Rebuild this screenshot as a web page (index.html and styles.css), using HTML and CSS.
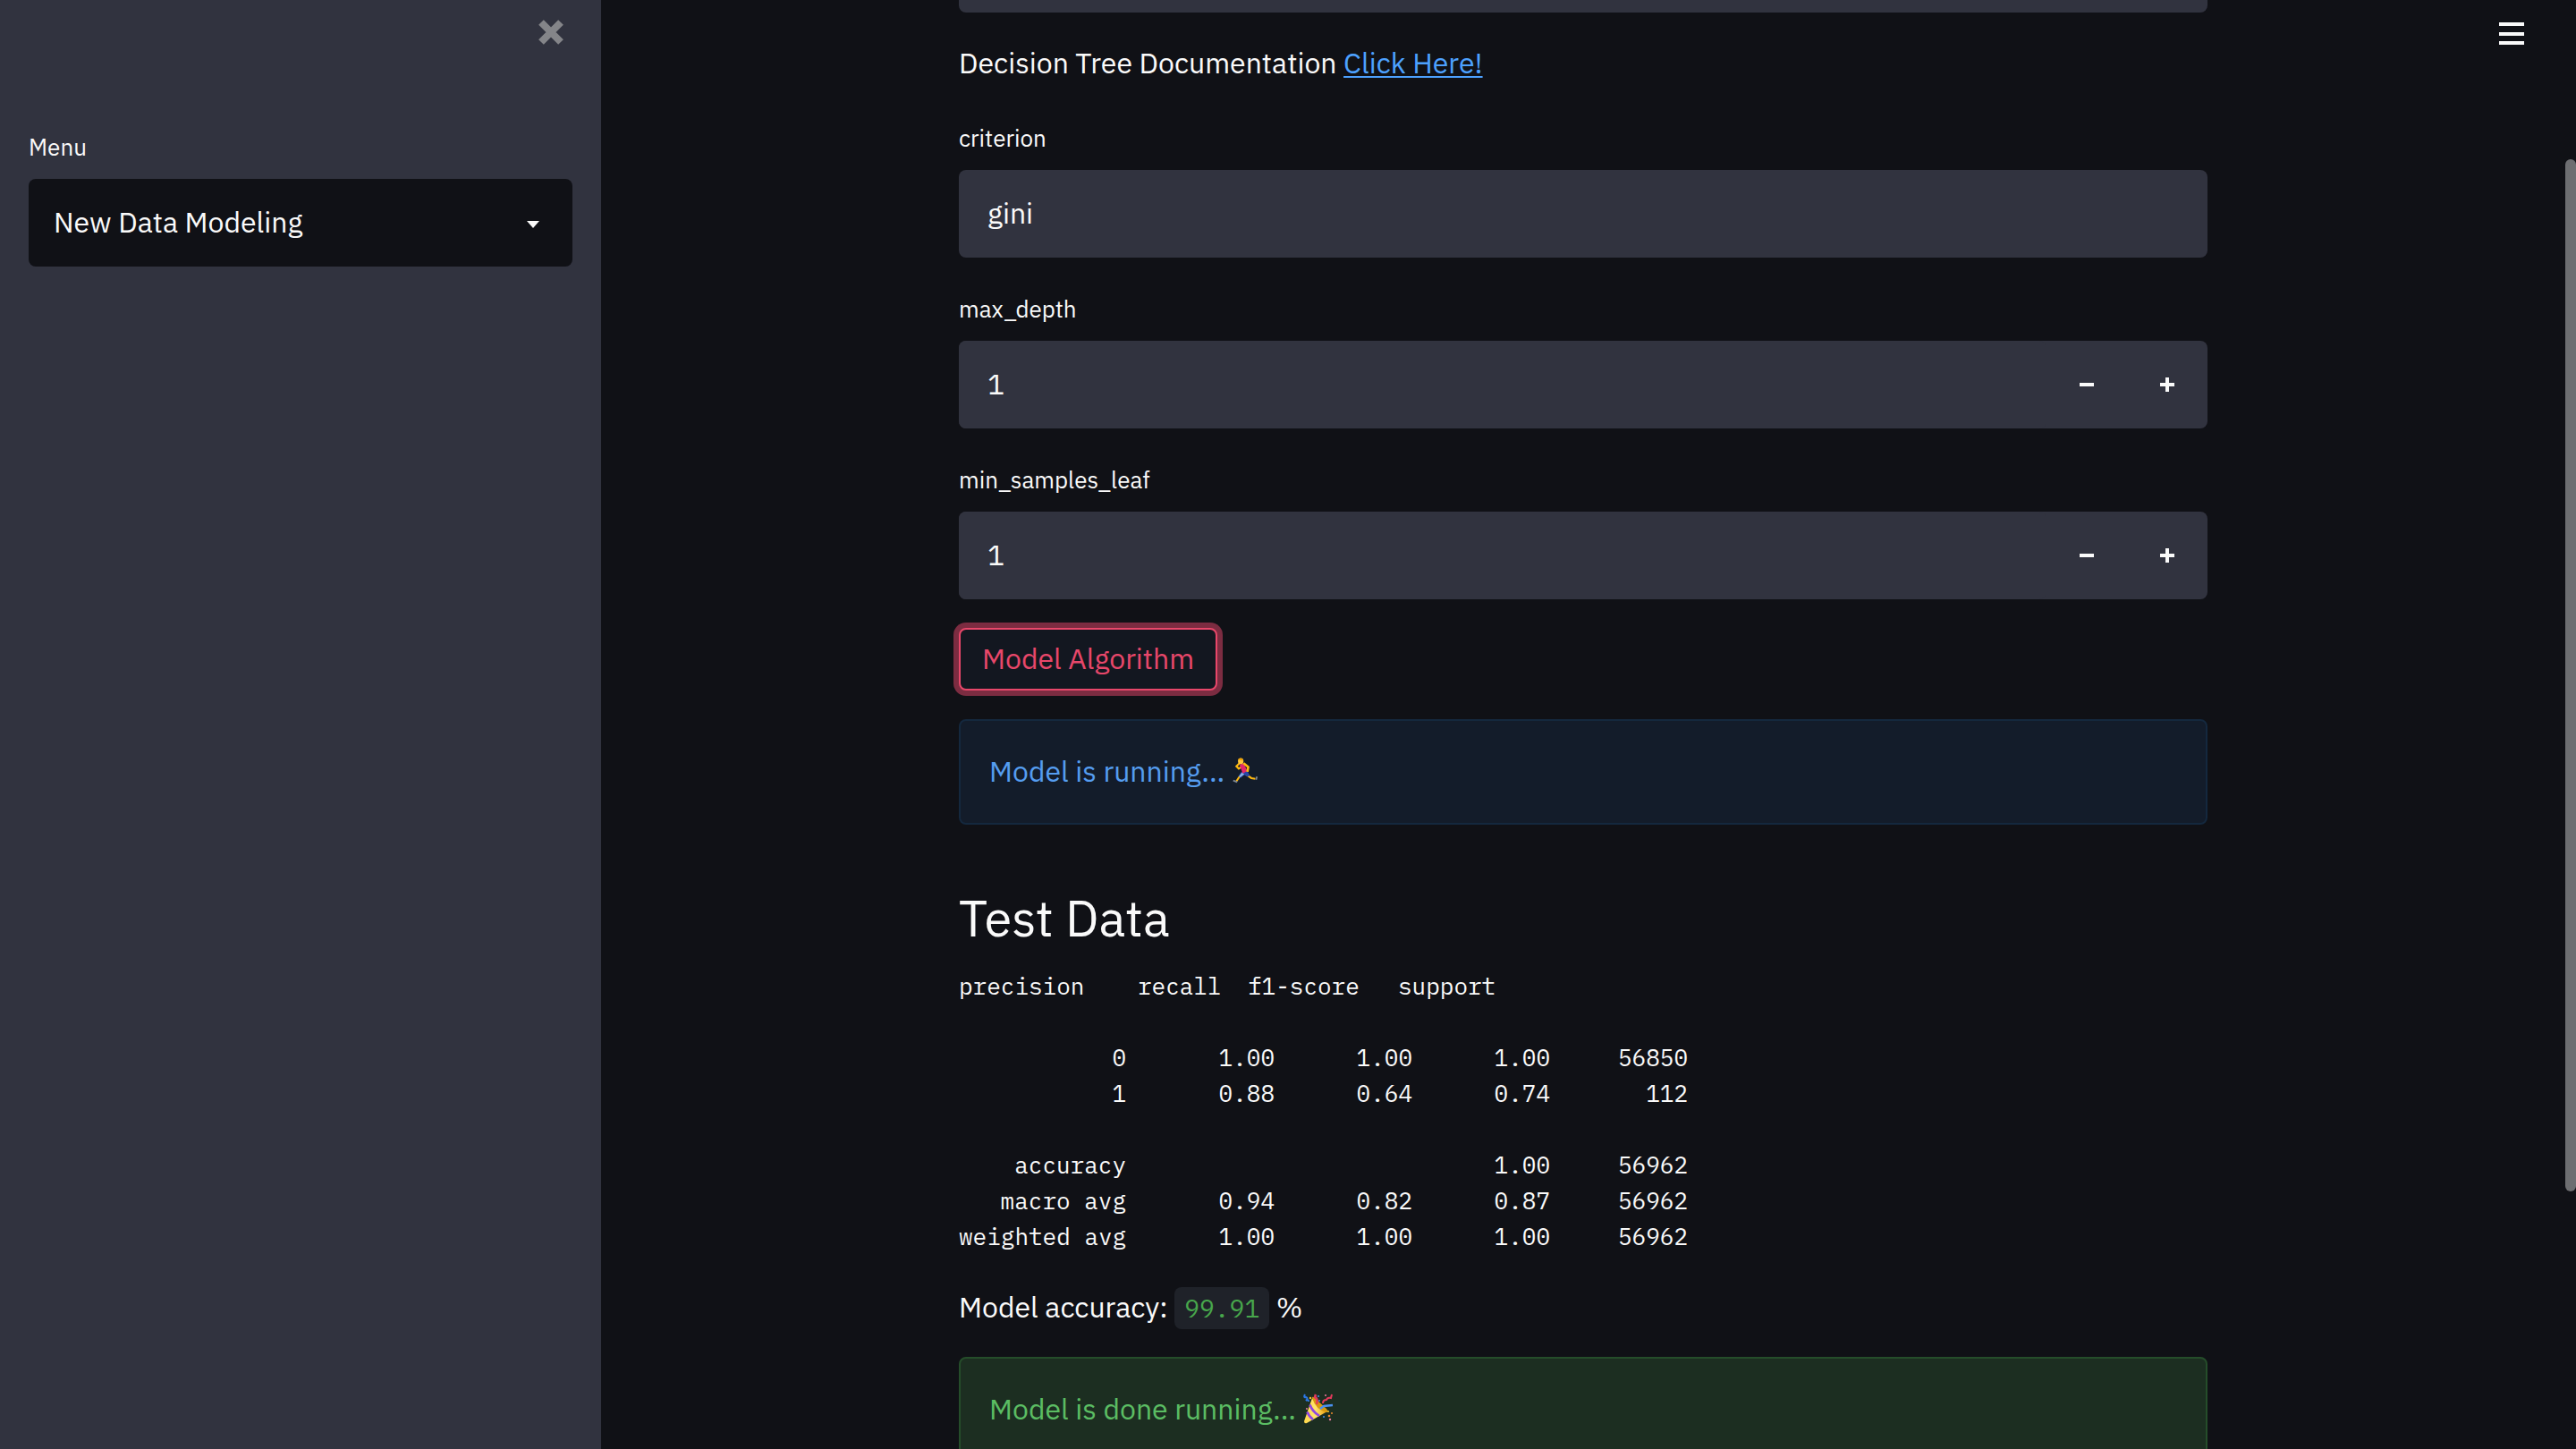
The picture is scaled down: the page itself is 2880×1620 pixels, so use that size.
FILE: index.html
```html
<!DOCTYPE html>
<html lang="en">
<head>
<meta charset="utf-8">
<title>New Data Modeling</title>
<link rel="stylesheet" href="styles.css">
</head>
<body>
<div class="app">
  <aside class="sidebar">
    <button class="close" type="button" aria-label="Close sidebar">
      <svg viewBox="0 0 28 28" width="28" height="28"><path d="M3 3 25 25M25 3 3 25" stroke="currentColor" stroke-width="8" fill="none"/></svg>
    </button>
    <div class="field">
      <label class="label" for="menu">Menu</label>
      <div class="select-wrap">
        <select class="control control-dark" id="menu"><option>New Data Modeling</option></select>
        <svg class="caret" viewBox="0 0 14 8" width="14" height="8" aria-hidden="true"><path d="M0 0h14L7 8z" fill="currentColor"/></svg>
      </div>
    </div>
  </aside>
  <main class="main">
    <button class="menu-button" type="button" aria-label="Main menu">
      <svg viewBox="0 0 28 26" width="28" height="26"><path d="M0 0h28v4H0zM0 11h28v4H0zM0 21h28v4H0z" fill="currentColor"/></svg>
    </button>
    <div class="content">
      <select class="control" aria-label="Algorithm"></select>
      <p class="text docs">Decision Tree Documentation <a class="link" href="#docs">Click Here!</a></p>
      <div class="field">
        <label class="label" for="criterion">criterion</label>
        <input class="control" id="criterion" type="text" value="gini">
      </div>
      <div class="field">
        <label class="label" for="max-depth">max_depth</label>
        <div class="number">
          <input class="control" id="max-depth" type="text" inputmode="numeric" value="1">
          <button class="step" type="button" aria-label="Decrease max_depth"><svg viewBox="0 0 16 16" width="16" height="16"><path d="M0 6h16v4H0z" fill="currentColor"/></svg></button>
          <button class="step" type="button" aria-label="Increase max_depth"><svg viewBox="0 0 16 16" width="16" height="16"><path d="M6 0h4v6h6v4h-6v6H6v-6H0V6h6z" fill="currentColor"/></svg></button>
        </div>
      </div>
      <div class="field">
        <label class="label" for="min-leaf">min_samples_leaf</label>
        <div class="number">
          <input class="control" id="min-leaf" type="text" inputmode="numeric" value="1">
          <button class="step" type="button" aria-label="Decrease min_samples_leaf"><svg viewBox="0 0 16 16" width="16" height="16"><path d="M0 6h16v4H0z" fill="currentColor"/></svg></button>
          <button class="step" type="button" aria-label="Increase min_samples_leaf"><svg viewBox="0 0 16 16" width="16" height="16"><path d="M6 0h4v6h6v4h-6v6H6v-6H0V6h6z" fill="currentColor"/></svg></button>
        </div>
      </div>
      <button class="run" type="button">Model Algorithm</button>
      <div class="alert alert-info" role="status">
        <span>Model is running...</span>
        <svg class="emoji" viewBox="0 0 34 34" width="30" height="32" role="img" aria-label="Runner">
          <path d="M10 7 6 11l3 3 5-3" fill="none" stroke="#ffb90f" stroke-width="2.4"/>
          <path d="M15 20 10 24 6 30M18 21l7 5 5 1" fill="none" stroke="#ffb90f" stroke-width="2.4"/>
          <path d="M12 18.500 20 17l3 6-3 1-4-2-5 4-2-3z" fill="#2746a6"/>
          <path d="M13 19 9 24l2 1 5-4z" fill="#8db4e8"/>
          <path d="m10 9 5-2 5 10-6 3z" fill="#e3286c"/>
          <path d="m15 7 6 5-1 6" fill="none" stroke="#ffb90f" stroke-width="3"/>
          <ellipse cx="11.500" cy="4.500" rx="3.500" ry="3.800" fill="#ffc83d"/>
          <path d="M8 3q1-3 5-2l2 3-4-1z" fill="#f0a000"/>
          <path d="m2 29 5 2M31 28l1-4" stroke="#7d8794" stroke-width="2"/>
        </svg>
      </div>
      <section class="report">
        <h2 class="heading">Test Data</h2>
        <table class="scores">
          <thead><tr><th scope="col">precision</th><th scope="col">recall</th><th scope="col">f1-score</th><th scope="col">support</th></tr></thead>
          <tbody>
            <tr><th scope="row">0</th><td>1.00</td><td>1.00</td><td>1.00</td><td>56850</td></tr>
            <tr><th scope="row">1</th><td>0.88</td><td>0.64</td><td>0.74</td><td>112</td></tr>
          </tbody>
          <tbody>
            <tr><th scope="row">accuracy</th><td></td><td></td><td>1.00</td><td>56962</td></tr>
            <tr><th scope="row">macro avg</th><td>0.94</td><td>0.82</td><td>0.87</td><td>56962</td></tr>
            <tr><th scope="row">weighted avg</th><td>1.00</td><td>1.00</td><td>1.00</td><td>56962</td></tr>
          </tbody>
        </table>
      </section>
      <p class="text">Model accuracy: <code class="code">99.91</code> %</p>
      <div class="alert alert-success" role="status">
        <span>Model is done running...</span>
        <svg class="emoji" viewBox="0 0 34 34" width="34" height="34" role="img" aria-label="Party popper">
          <defs><linearGradient id="cone" x1="0" x2="1"><stop offset="0" stop-color="#ffd84a"/><stop offset=".5" stop-color="#ffe46b"/><stop offset="1" stop-color="#e8990c"/></linearGradient></defs>
          <path d="M10 5 1 31q0 3 3 2l23-13Q18 17 10 5z" fill="url(#cone)"/>
          <path d="M10 5q0-3 4 1l12 11q3 4 0 4Q14 18 10 5z" fill="#d9980d"/>
          <path d="M7.500 12.500Q10 20 18 25M4.500 20.500Q6 25 11 29" fill="none" stroke="#9046e0" stroke-width="2.600"/>
          <path d="M15 12q2-6-2-8l1-3" fill="none" stroke="#e23a5c" stroke-width="2.600"/>
          <path d="M22 11q0-4 4-4 1-3 5-2l1-4" fill="none" stroke="#e23a5c" stroke-width="2"/>
          <path d="M2 1q-2 4 1 3 3 1 0 4 3-2 3 1" fill="none" stroke="#2c78e4" stroke-width="2"/>
          <path d="m19 17 4-3 10-1" fill="none" stroke="#4a90f0" stroke-width="2.400"/>
          <g fill="#4a90f0"><circle cx="17" cy="3" r="1"/><circle cx="18" cy="8" r="1"/><circle cx="23" cy="26" r="1"/></g>
          <g fill="#f5c430"><circle cx="8" cy="5" r="1.200"/><circle cx="28" cy="20" r="1"/></g>
          <g fill="#f08b2c"><circle cx="29" cy="25" r="1.300"/><circle cx="32" cy="22" r="1"/></g>
          <g fill="#f07aa0"><circle cx="4" cy="17" r="1"/><circle cx="30" cy="29" r="1.200"/><circle cx="25" cy="2" r="1"/></g>
        </svg>
      </div>
    </div>
  </main>
  <div class="scrollbar" aria-hidden="true"><div class="thumb"></div></div>
</div>
</body>
</html>
```
FILE: styles.css
```css
:root {
  --bg: #101116;
  --panel: #31333f;
  --fg: #fafafa;
  --sans: "IBM Plex Sans", Roboto, "Liberation Sans", sans-serif;
  --mono: "IBM Plex Mono", "Liberation Mono", monospace;
}
* { box-sizing: border-box; }
body {
  margin: 0;
  background: var(--bg);
  color: var(--fg);
  font: 32px/48px var(--sans);
}
button, input, select { font: inherit; color: inherit; }
button { cursor: pointer; }
.app { display: flex; height: 100vh; overflow: hidden; }
.sidebar {
  flex: 0 0 672px;
  display: flex;
  flex-direction: column;
  padding: 22px 32px;
  background: var(--panel);
}
.close {
  align-self: flex-end;
  height: 28px;
  margin: 0 10px 89px 0;
  padding: 0;
  border: 0;
  background: none;
  color: #848589;
}
.close svg, .menu-button svg, .step svg { display: block; }
.field { display: flex; flex-direction: column; gap: 10px; }
.label { font-size: 26px; line-height: 51px; }
.control {
  width: 100%;
  height: 98px;
  padding: 0 32px 2px;
  border: 0;
  border-radius: 8px;
  outline: 0;
  background: var(--panel);
  appearance: none;
}
.control-dark { padding: 0 28px 2px; background: var(--bg); }
.select-wrap { display: grid; align-items: center; }
.select-wrap > * { grid-area: 1 / 1; }
.caret { justify-self: end; margin: 4px 37px 0 0; pointer-events: none; }
.main { position: relative; flex: 1; min-width: 0; overflow: hidden; }
.menu-button {
  position: absolute;
  top: 25px;
  right: 46px;
  padding: 0;
  border: 0;
  background: none;
}
/* Scrolled so that only the lower edge of the first control shows. */
.content {
  display: flex;
  flex-direction: column;
  gap: 32px;
  max-width: 1460px;
  margin: -84px auto 0;
  padding: 0 32px 32px;
}
.text { margin: 0; }
.docs { padding-bottom: 3px; }
.link { color: #4da1ff; text-underline-offset: 3px; text-decoration-thickness: 2px; }
.number { display: flex; border-radius: 8px; background: var(--panel); }
.number .control { flex: 1; min-width: 0; }
.step {
  display: grid;
  place-items: center;
  width: 90px;
  padding: 0;
  border: 0;
  background: none;
}
.run {
  align-self: flex-start;
  height: 70px;
  padding: 0 24px 2px;
  border: 2px solid #e8476a;
  border-radius: 8px;
  background: #131720;
  color: #e8476a;
  box-shadow: 0 0 0 6px #7c2c41;
}
.alert {
  display: flex;
  align-items: center;
  gap: 8px;
  height: 118px;
  flex-shrink: 0;
  padding: 0 32px 2px;
  border: 2px solid;
  border-radius: 8px;
}
.alert-info { border-color: #14283e; background: #131c2a; color: #559df0; }
.alert-success { border-color: #254d2a; background: #1c2e21; color: #5bbd63; }
.report { display: flex; flex-direction: column; gap: 16px; padding: 32px 0 3px; }
.heading { margin: 0; font-size: 56px; font-weight: 400; line-height: 80px; }
.scores { display: block; font: 26px/40px var(--mono); }
.scores thead, .scores tbody { display: block; }
.scores tr { display: grid; grid-template-columns: 187px 166px 154px 154px 154px; }
.scores th, .scores td { padding: 0; font-weight: 400; text-align: right; white-space: nowrap; }
/* Headings run on their own left-aligned tracks, like the printed report. */
.scores thead tr { grid-template-columns: 200px 123px 168px 154px; }
.scores thead th { text-align: left; }
.scores tbody { padding-top: 40px; }
.code {
  padding: 5px 11px;
  border-radius: 8px;
  background: #1f2229;
  color: #48a74c;
  font: 28px/32px var(--mono);
}
.scrollbar { flex: 0 0 12px; padding-top: 178px; }
.thumb { height: 80%; border-radius: 6px; background: #6d6e71; }
```
